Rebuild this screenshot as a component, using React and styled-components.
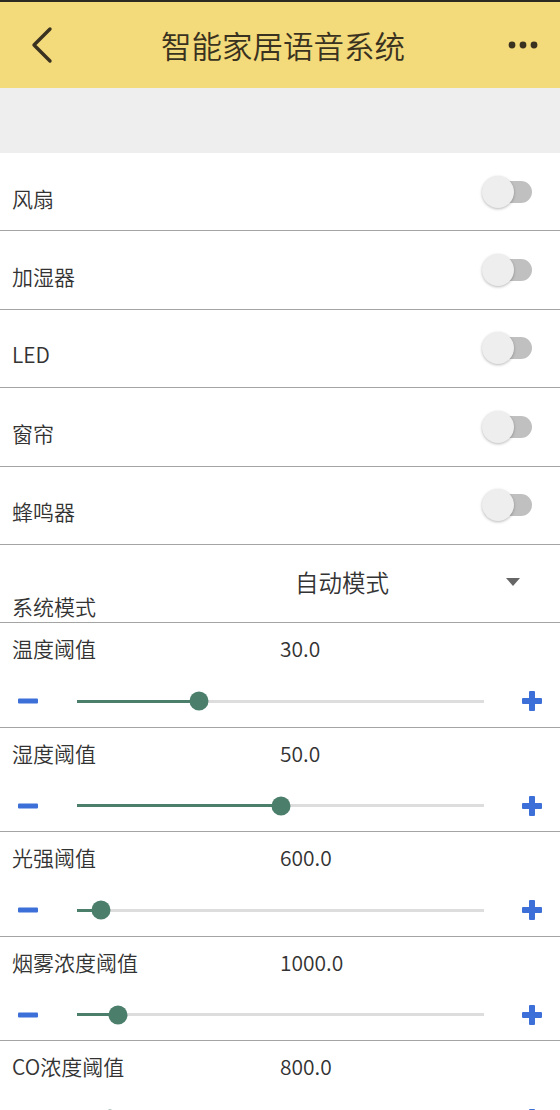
import React, { useState } from "react";
import styled, { createGlobalStyle } from "styled-components";

const GlobalStyle = createGlobalStyle`
  body {
    margin: 0;
    background: #ffffff;
    font-family: "Noto Sans CJK SC", "Noto Sans", Roboto, sans-serif;
    color: #333333;
  }
`;

const switches = ["风扇", "加湿器", "LED", "窗帘", "蜂鸣器"];

const thresholds = [
  { label: "温度阈值", value: 30, max: 100 },
  { label: "湿度阈值", value: 50, max: 100 },
  { label: "光强阈值", value: 600, max: 10000 },
  { label: "烟雾浓度阈值", value: 1000, max: 10000 },
  { label: "CO浓度阈值", value: 800, max: 10000 },
];

export default function App() {
  const [on, setOn] = useState(switches.map(() => false));
  const [vals, setVals] = useState(thresholds.map((t) => t.value));

  const step = (i, d) =>
    setVals((v) =>
      v.map((x, j) =>
        j === i ? Math.min(thresholds[i].max, Math.max(0, x + d)) : x
      )
    );

  return (
    <Page>
      <GlobalStyle />
      <Header>
        <IconButton aria-label="back">
          <svg width="24" height="38" viewBox="0 0 24 38">
            <path
              d="M20 3 L4 19 L20 35"
              fill="none"
              stroke="#3a3220"
              strokeWidth="3.4"
              strokeLinecap="round"
              strokeLinejoin="round"
            />
          </svg>
        </IconButton>
        <Title>智能家居语音系统</Title>
        <IconButton aria-label="more">
          <svg width="30" height="8" viewBox="0 0 30 8">
            <circle cx="4" cy="4" r="3.4" fill="#3a3220" />
            <circle cx="15" cy="4" r="3.4" fill="#3a3220" />
            <circle cx="26" cy="4" r="3.4" fill="#3a3220" />
          </svg>
        </IconButton>
      </Header>
      <Band />

      {switches.map((name, i) => (
        <SwitchRow key={name}>
          <SwitchLabel>{name}</SwitchLabel>
          <Toggle
            $on={on[i]}
            onClick={() => setOn((o) => o.map((x, j) => (j === i ? !x : x)))}
          >
            <Thumb $on={on[i]} />
          </Toggle>
        </SwitchRow>
      ))}

      <ModeRow>
        <ModeLabel>系统模式</ModeLabel>
        <ModeSelect>
          <ModeValue>自动模式</ModeValue>
          <Caret />
        </ModeSelect>
      </ModeRow>

      {thresholds.map((t, i) => (
        <SliderRow key={t.label}>
          <SliderHead>
            <Label>{t.label}</Label>
            <Value>{vals[i].toFixed(1)}</Value>
          </SliderHead>
          <SliderLine>
            <StepButton onClick={() => step(i, -t.max / 100)}>
              <svg width="20" height="6" viewBox="0 0 20 6">
                <rect x="0" y="0.5" width="20" height="5" rx="1" fill="#3d6fd8" />
              </svg>
            </StepButton>
            <Track>
              <Fill style={{ width: `${(vals[i] / t.max) * 100}%` }} />
              <Knob style={{ left: `${(vals[i] / t.max) * 100}%` }} />
            </Track>
            <StepButton onClick={() => step(i, t.max / 100)}>
              <svg width="20" height="20" viewBox="0 0 20 20">
                <rect x="7" y="0" width="6" height="20" rx="1" fill="#3d6fd8" />
                <rect x="0" y="7" width="20" height="6" rx="1" fill="#3d6fd8" />
              </svg>
            </StepButton>
          </SliderLine>
        </SliderRow>
      ))}
    </Page>
  );
}

const Page = styled.div`
  width: 560px;
`;

const Header = styled.header`
  height: 86px;
  border-top: 2px solid #2a2a22;
  background: #f3da7a;
  display: flex;
  align-items: center;
  justify-content: space-between;
  padding: 0 22px 0 30px;
`;

const IconButton = styled.button`
  border: 0;
  background: none;
  padding: 0;
  display: flex;
  align-items: center;
`;

const Title = styled.h1`
  margin: 0 0 0 4px;
  font-size: 30.5px;
  font-weight: 350;
  color: #3a3220;
`;

const Band = styled.div`
  height: 65px;
  background: #eeeeee;
`;

const SwitchRow = styled.div`
  height: 78.4px;
  box-sizing: border-box;
  border-bottom: 1.5px solid #a4a4a4;
  display: flex;
  align-items: center;
  justify-content: space-between;
  padding: 0 28px 0 12px;
`;

const Label = styled.span`
  font-size: 21px;
  font-weight: 350;
  color: #333333;
`;

const SwitchLabel = styled(Label)`
  margin-top: 12px;
`;

const Toggle = styled.div`
  position: relative;
  width: 46px;
  height: 22px;
  border-radius: 11px;
  background: ${(p) => (p.$on ? "#8fc3ae" : "#c0c0c0")};
  cursor: pointer;
`;

const Thumb = styled.div`
  position: absolute;
  top: -5px;
  left: ${(p) => (p.$on ? "18px" : "-4px")};
  width: 32px;
  height: 32px;
  border-radius: 50%;
  background: ${(p) => (p.$on ? "#4b7f6c" : "#eeeeee")};
  box-shadow: 0 1px 3px rgba(0, 0, 0, 0.28);
`;

const ModeRow = styled.div`
  height: 78.4px;
  box-sizing: border-box;
  border-bottom: 1.5px solid #a4a4a4;
  display: grid;
  grid-template-columns: 190px 1fr;
  padding: 0 0 0 12px;
`;

const ModeLabel = styled.span`
  align-self: end;
  font-size: 21px;
  font-weight: 350;
  line-height: 28px;
  color: #333333;
  padding-bottom: 2px;
`;

const ModeSelect = styled.div`
  display: flex;
  align-items: center;
  justify-content: space-between;
  padding: 0 40px 0 93px;
  margin-top: -4px;
`;

const ModeValue = styled.span`
  font-size: 23.5px;
  font-weight: 350;
  color: #333333;
`;

const Caret = styled.span`
  width: 0;
  height: 0;
  border-left: 7.5px solid transparent;
  border-right: 7.5px solid transparent;
  border-top: 8px solid #666666;
`;

const SliderRow = styled.div`
  height: 104.4px;
  box-sizing: border-box;
  border-bottom: 1.5px solid #a4a4a4;
  display: flex;
  flex-direction: column;
  padding: 10px 0 0 12px;
`;

const SliderHead = styled.div`
  display: grid;
  grid-template-columns: 268px 1fr;
  align-items: center;
  height: 30px;
`;

const Value = styled.span`
  font-size: 21px;
  font-weight: 350;
  color: #333333;
`;

const SliderLine = styled.div`
  display: flex;
  align-items: center;
  height: 36px;
  margin-top: 20px;
  padding: 0 18px 0 6px;
`;

const StepButton = styled.button`
  border: 0;
  background: none;
  padding: 0;
  display: flex;
  align-items: center;
  width: 20px;
  cursor: pointer;
`;

const Track = styled.div`
  position: relative;
  flex: 1;
  height: 3px;
  background: #dddddd;
  margin: 0 38px 0 39px;
`;

const Fill = styled.div`
  height: 100%;
  background: #4b7f6c;
`;

const Knob = styled.div`
  position: absolute;
  top: 50%;
  width: 19px;
  height: 19px;
  border-radius: 50%;
  background: #4b7f6c;
  transform: translate(-50%, -50%);
`;
